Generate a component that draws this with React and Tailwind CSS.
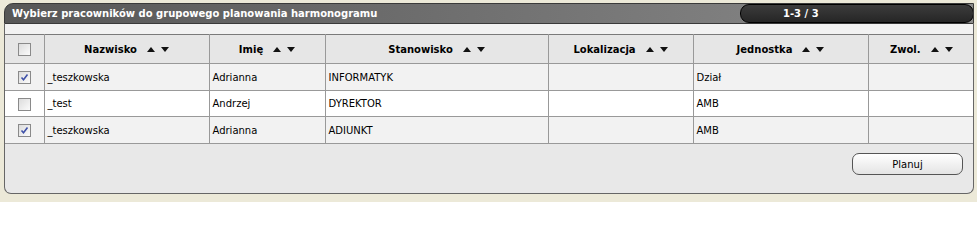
import React from "react";

function SortArrows() {
  return (
    <span className="inline-flex items-center gap-[6px] ml-[10px] align-middle">
      <svg width="8" height="5" viewBox="0 0 8 5"><path d="M0 5 L4 0 L8 5 Z" fill="#111" /></svg>
      <svg width="8" height="5" viewBox="0 0 8 5"><path d="M0 0 L8 0 L4 5 Z" fill="#111" /></svg>
    </span>
  );
}

function Check({ checked }) {
  return (
    <span className="inline-flex w-[13px] h-[13px] border border-[#8a8a8a] bg-gradient-to-br from-[#dcdcdc] to-[#fbfbfb] items-center justify-center align-middle">
      {checked && (
        <svg width="9" height="9" viewBox="0 0 9 9">
          <path d="M1.5 4.5 L3.5 6.8 L7.5 1.5" stroke="#3f51a8" strokeWidth="1.6" fill="none" />
        </svg>
      )}
    </span>
  );
}

const rows = [
  { c: true, n: "_teszkowska", i: "Adrianna", s: "INFORMATYK", l: "", j: "Dział", z: "" },
  { c: false, n: "_test", i: "Andrzej", s: "DYREKTOR", l: "", j: "AMB", z: "" },
  { c: true, n: "_teszkowska", i: "Adrianna", s: "ADIUNKT", l: "", j: "AMB", z: "" },
];

const cols = [
  { w: "w-[39px]" },
  { w: "w-[165px]", t: "Nazwisko" },
  { w: "w-[116px]", t: "Imię" },
  { w: "w-[223px]", t: "Stanowisko" },
  { w: "w-[145px]", t: "Lokalizacja" },
  { w: "w-[175px]", t: "Jednostka" },
  { w: "w-[106px]", t: "Zwol." },
];

export default function App() {
  return (
    <div className="w-[977px] h-[202px] bg-[#ece9d8] pt-[3px] pl-[4px] text-[10px] text-black" style={{ fontFamily: '"DejaVu Sans", Verdana, sans-serif' }}>
      <div className="w-[970px]">
        <div className="h-[21px] flex rounded-tl-[9px] border border-[#3a3a3a] bg-gradient-to-r from-[#575757] to-[#8c8c8c] overflow-hidden">
          <div className="flex-1 flex items-center pl-[7px] text-white font-bold text-[10px]">
            Wybierz pracowników do grupowego planowania harmonogramu
          </div>
          <div className="w-[234px] h-[19px] rounded-[9px] border border-black bg-gradient-to-b from-[#3c3c3c] to-[#262626] flex items-center pl-[42px] text-white font-bold text-[10px] -mr-[1px]">
            1-3 / 3
          </div>
        </div>
        <div className="border-x border-b border-[#666] rounded-b-[7px] bg-[#e8e8e8] overflow-hidden">
          <div className="h-[10px] bg-[#f2f2f2]" />
          <table className="border-collapse w-full table-fixed">
            <colgroup>
              {cols.map((c, k) => (
                <col key={k} className={c.w} />
              ))}
            </colgroup>
            <thead>
              <tr className="h-[29px] bg-[#e6e6e6] border-t border-[#7a7a7a]">
                {cols.map((c, k) => (
                  <th key={k} className={`border-l border-r border-b border-[#999] first:border-l-0 last:border-r-0 font-bold text-center p-0`}>
                    {k === 0 ? <Check checked={false} /> : (
                      <span className="inline-flex items-center">{c.t}<SortArrows /></span>
                    )}
                  </th>
                ))}
              </tr>
            </thead>
            <tbody>
              {rows.map((r, k) => (
                <tr key={k} className={`${k === 1 ? "h-[26px] bg-white" : "h-[27px] bg-[#f2f2f2]"}`}>
                  <td className="border-r border-b border-[#999] text-center p-0"><Check checked={r.c} /></td>
                  <td className="border border-[#999] px-[3px]">{r.n}</td>
                  <td className="border border-[#999] px-[3px]">{r.i}</td>
                  <td className="border border-[#999] px-[3px]">{r.s}</td>
                  <td className="border border-[#999] px-[3px]">{r.l}</td>
                  <td className="border border-[#999] px-[3px]">{r.j}</td>
                  <td className="border-l border-b border-[#999] px-[3px]">{r.z}</td>
                </tr>
              ))}
            </tbody>
          </table>
          <div className="h-[49px] flex items-start justify-end pr-[10px] pt-[9px]">
            <button className="w-[111px] h-[22px] rounded-[7px] border border-[#555] bg-gradient-to-b from-[#ffffff] to-[#e4e4e4] text-[10px] text-black">
              Planuj
            </button>
          </div>
        </div>
      </div>
    </div>
  );
}
